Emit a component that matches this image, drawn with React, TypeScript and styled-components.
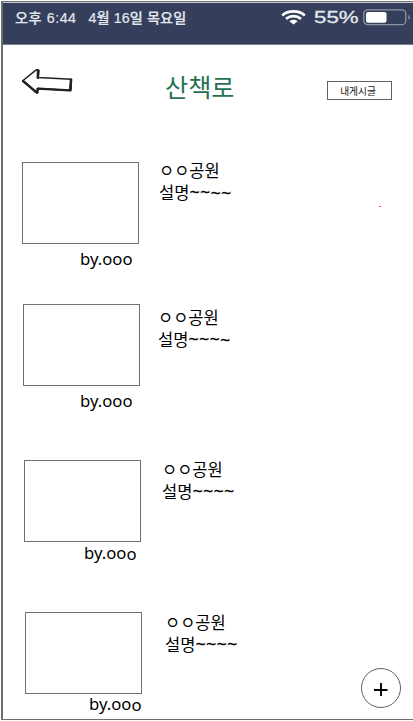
import React from "react";
import styled, { createGlobalStyle } from "styled-components";

const GlobalStyle = createGlobalStyle`
  * { box-sizing: border-box; }
  body { margin: 0; background: #fff; overflow: hidden; }
`;

const Screen = styled.main`
  width: 413px;
  height: 721px;
  padding: 1px 0 0 1px;
  display: flex;
  flex-direction: column;
  font-family: "Noto Sans CJK KR", sans-serif;
  color: #000;
  background: #fff;
`;

const Frame = styled.div`
  flex: none;
  width: 412px;
  height: 719px;
  border: solid #6d6f72;
  border-width: 1px 0 1px 2px;
`;

const StatusBar = styled.header`
  height: 43px;
  border-top: 1px solid #c9ccce;
  border-bottom: 1px solid #7c8292;
  background: #353f5b;
  display: flex;
  justify-content: space-between;
  align-items: flex-start;
  color: #e4e7ee;
`;

const Clock = styled.div`
  display: flex;
  gap: 12px;
  padding: 5px 0 0 12px;
  font-family: "Liberation Sans", "Noto Sans CJK KR", sans-serif;
  font-size: 14.2px;
  line-height: 20px;
  font-weight: 500;
  letter-spacing: 0.1px;
  -webkit-text-stroke: 0.2px #e4e7ee;
  white-space: pre;
`;

const Time = styled.span`
  letter-spacing: 0.55px;
`;

const Indicators = styled.div`
  display: flex;
  align-items: center;
  height: 20px;
  margin-top: 4px;
`;

const Percent = styled.span`
  display: block;
  width: 45px;
  margin: 0 4px 0 7px;
  font: 16.5px/20px "Liberation Sans", sans-serif;
  -webkit-text-stroke: 0.3px #e4e7ee;
  transform: scaleX(1.35);
  transform-origin: left;
  white-space: nowrap;
`;

const TopBar = styled.div`
  height: 117px;
  display: flex;
  align-items: flex-start;
`;

const BackButton = styled.button`
  width: 54px;
  height: 30px;
  margin: 24px 0 0 17px;
  padding: 0;
  border: 0;
  background: none;
`;

const Title = styled.h1`
  width: 80px;
  margin: 22px 0 0 91px;
  font-size: 25.2px;
  line-height: 38px;
  font-weight: 400;
  color: #247253;
  white-space: nowrap;
`;

const MyPosts = styled.button`
  width: 65px;
  height: 19px;
  margin: 36px 0 0 82px;
  padding: 1px 3px 0 0;
  border: 1px solid #606164;
  background: #fff;
  color: #111;
  font: 9.7px/17px "Noto Sans CJK KR", sans-serif;
`;

const List = styled.section`
  height: 557px;
`;

const Walk = styled.article<{ $height: number; $indent: number }>`
  height: ${(p) => p.$height}px;
  padding-left: ${(p) => p.$indent}px;
  display: flex;
  align-items: flex-start;
`;

const Preview = styled.div`
  width: 118px;
`;

const Thumbnail = styled.div`
  width: 117.4px;
  height: 82px;
  border: 1px solid #707174;
`;

const Author = styled.div<{ $indent: number; $gap: number }>`
  display: flex;
  margin: ${(p) => p.$gap}px 0 0 ${(p) => p.$indent}px;
  font: 16.7px/22px "Noto Sans", sans-serif;
  white-space: nowrap;
`;

const Glyph = styled.span<{ $drop?: number }>`
  padding-top: ${(p) => p.$drop ?? 0}px;
`;

const Tilde = styled(Glyph)`
  width: 10.5px;
  font-family: "Noto Sans", sans-serif;
  font-size: 18px;
  -webkit-text-stroke: 0.2px #000;
`;

const Details = styled.div<{ $indent: number; $gap: number }>`
  margin: ${(p) => p.$gap}px 0 0 ${(p) => p.$indent}px;
  font-size: 16.5px;
  line-height: 22px;
  white-space: nowrap;
`;

const Line = styled.div`
  display: flex;
  height: 22px;
`;

const Dot = styled.i`
  width: 2px;
  height: 1px;
  margin: 44px 32px 0 auto;
  background: #f04444;
`;

const AddButton = styled.button`
  position: absolute;
  left: 361px;
  top: 668px;
  width: 40px;
  height: 40px;
  padding: 0;
  border: 1px solid #606164;
  border-radius: 50%;
  background: #fff;
  display: grid;
  place-items: center;
`;

interface WalkData {
  height: number;
  indent: number;
  byIndent: number;
  byGap: number;
  byDrop: number;
  textIndent: number;
  textGap: number;
  tildeDrops: number[];
  dot?: boolean;
}

const walks: WalkData[] = [
  { height: 142, indent: 19, byIndent: 58, byGap: 4, byDrop: 0, textIndent: 19, textGap: -3, tildeDrops: [0, 0, 1, 1], dot: true },
  { height: 156, indent: 20, byIndent: 57, byGap: 4, byDrop: 0, textIndent: 17, textGap: 2, tildeDrops: [0, 0, 0, 1] },
  { height: 152, indent: 21, byIndent: 60, byGap: 0, byDrop: 1, textIndent: 20, textGap: -2, tildeDrops: [0, 0, 0, 0] },
  { height: 107, indent: 22, byIndent: 64, byGap: -1, byDrop: 1, textIndent: 22, textGap: -1, tildeDrops: [0, 0, 0, 0] },
];

const BackArrow = () => (
  <svg width="54" height="30" viewBox="0 0 54 30" fill="none" stroke="#241f22" strokeLinejoin="round" strokeLinecap="round">
    <path d="M3 11.5 L16.5 .7 L19 1.3 L18.3 8.6 L51.5 10.2 L51 21.5 L18 19.5 L17.5 23.9 L15 22.7 Z" strokeWidth="1.5" />
    <path d="M3 12 L16 22.9 M18 19.6 L50 21.4 L51 10.7 M17.5 20 L17.3 23.7 M18 1.7 L17.8 8.7" strokeWidth="2.4" />
  </svg>
);

const WifiIcon = () => (
  <svg width="26" height="16" viewBox="0 0 26 16" fill="none" stroke="#fff">
    <path d="M1.2 6.5 C7 1.1 18 1.1 23.8 6.5 M5 9.9 C9.5 6.3 15.5 6.3 20 9.9" strokeWidth="2.7" />
    <path d="M8.3 12.3 Q12.5 9.4 16.7 12.3 L12.5 15.6 Z" fill="#fff" stroke="none" />
  </svg>
);

const BatteryIcon = () => (
  <svg width="50" height="18" viewBox="0 0 50 18">
    <rect x=".8" y="1.9" width="42" height="14.8" rx="4" fill="none" stroke="#8f96a8" strokeWidth="1.3" />
    <rect x="3" y="4" width="20.5" height="10.8" rx="2" fill="#fff" />
    <path d="M45.5 6.5 Q48.7 9.3 45.5 12.1 Z" fill="#8f96a8" />
  </svg>
);

const PlusIcon = () => (
  <svg width="16" height="16" viewBox="0 0 16 16" stroke="#000" strokeWidth="1.9">
    <path d="M1 10 H14.5 M8 3 V16" />
  </svg>
);

export default function App() {
  return (
    <>
      <GlobalStyle />
      <Screen>
        <Frame>
          <StatusBar>
            <Clock>
              <Time>오후 6:44</Time>
              <span>4월 16일 목요일</span>
            </Clock>
            <Indicators>
              <WifiIcon />
              <Percent>55%</Percent>
              <BatteryIcon />
            </Indicators>
          </StatusBar>
          <TopBar>
            <BackButton aria-label="뒤로"><BackArrow /></BackButton>
            <Title>산책로</Title>
            <MyPosts>내게시글</MyPosts>
          </TopBar>
          <List>
            {walks.map((w, i) => (
              <Walk key={i} $height={w.height} $indent={w.indent}>
                <Preview>
                  <Thumbnail />
                  <Author $indent={w.byIndent} $gap={w.byGap}>
                    <Glyph>by.oo</Glyph>
                    <Glyph $drop={w.byDrop}>o</Glyph>
                  </Author>
                </Preview>
                <Details $indent={w.textIndent} $gap={w.textGap}>
                  <Line>ㅇㅇ공원</Line>
                  <Line>
                    설명
                    {w.tildeDrops.map((drop, j) => (
                      <Tilde key={j} $drop={drop}>~</Tilde>
                    ))}
                  </Line>
                </Details>
                {w.dot && <Dot />}
              </Walk>
            ))}
          </List>
        </Frame>
      </Screen>
      <AddButton aria-label="추가"><PlusIcon /></AddButton>
    </>
  );
}
